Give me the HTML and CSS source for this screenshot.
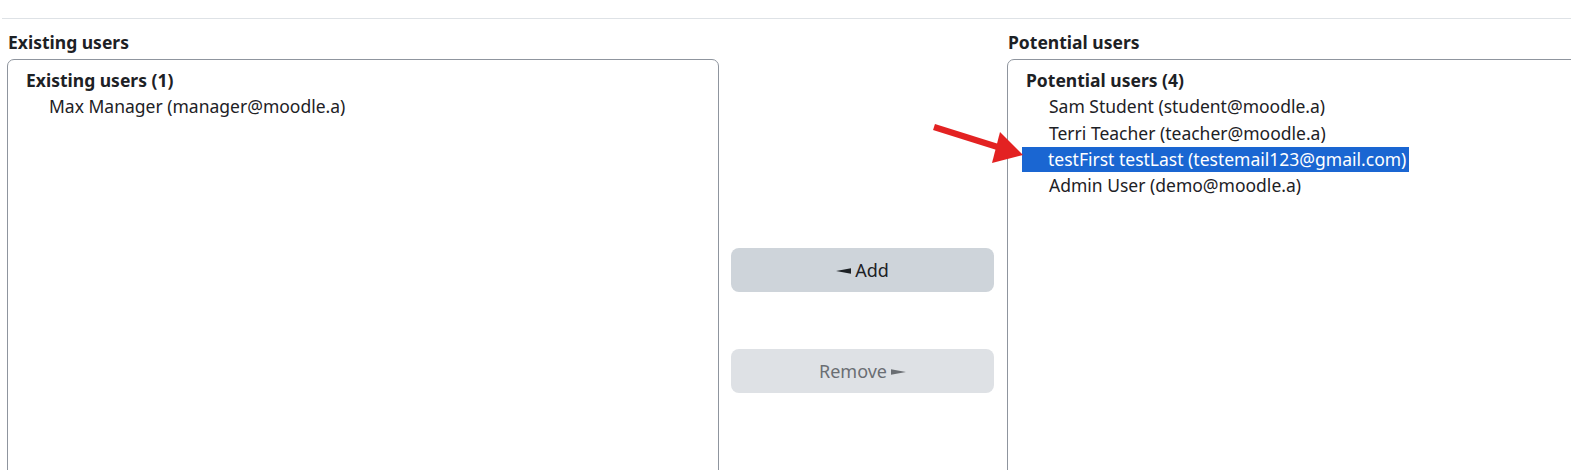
FILE: index.html
```html
<!DOCTYPE html>
<html>
<head>
<meta charset="utf-8">
<link rel="stylesheet" href="styles.css">
</head>
<body>
<div class="page">
  <div class="topline"></div>
  <div class="selector">
    <div class="col col-side">
      <label class="col-label">Existing users</label>
      <div class="listbox">
        <div class="group-label">Existing users (1)</div>
        <div class="option">Max Manager (manager@moodle.a)</div>
      </div>
    </div>
    <div class="col col-mid">
      <button class="btn btn-add"><svg class="tri" width="15" height="6" viewBox="0 0 15 6"><polygon points="0,3 15,0.3 15,5.7" fill="#1d2125"/></svg>Add</button>
      <button class="btn btn-remove" disabled>Remove<svg class="tri tri-r" width="15" height="6" viewBox="0 0 15 6"><polygon points="15,3 0,0.3 0,5.7" fill="#6a6e73"/></svg></button>
    </div>
    <div class="col col-side">
      <label class="col-label">Potential users</label>
      <div class="listbox">
        <div class="group-label">Potential users (4)</div>
        <div class="option">Sam Student (student@moodle.a)</div>
        <div class="option">Terri Teacher (teacher@moodle.a)</div>
        <div class="option selected"><span>testFirst testLast (testemail123@gmail.com)</span></div>
        <div class="option">Admin User (demo@moodle.a)</div>
      </div>
    </div>
  </div>
  <svg class="annot-arrow" width="110" height="60" viewBox="0 0 110 60">
    <line x1="4" y1="9" x2="74" y2="31" stroke="#e32222" stroke-width="6.5"/>
    <polygon points="93,37 70,14 62,45" fill="#e32222"/>
  </svg>
</div>
</body>
</html>
```
FILE: styles.css
```css
html, body {
  margin: 0;
  padding: 0;
  background: #fff;
}
body {
  font-family: "Noto Sans", "Open Sans", sans-serif;
  font-size: 17.5px;
  color: #1d2125;
  overflow: hidden;
}
.page {
  position: relative;
  width: 1571px;
  height: 470px;
  overflow: hidden;
}
.topline {
  margin: 18px 0 0 2px;
  border-top: 1px solid #dee2e6;
}
.selector {
  display: flex;
  padding-left: 7px;
  width: 1800px;
}
.col-side {
  width: 712px;
  flex: none;
  display: flex;
  flex-direction: column;
}
.col-label {
  font-weight: 700;
  line-height: 24px;
  margin-top: 11px;
  height: 29px;
  padding-left: 1px;
}
.listbox {
  border: 1px solid #8f959e;
  border-radius: 7px;
  height: 440px;
  padding: 7px 0 0 14px;
  box-sizing: border-box;
}
.group-label {
  font-weight: 700;
  height: 26.3px;
  line-height: 26.3px;
  padding-left: 4px;
}
.option {
  height: 26.3px;
  line-height: 26.3px;
  white-space: nowrap;
}
.option {
  padding-left: 27px;
}
.option.selected {
  padding-left: 0;
}
.option.selected > span {
  display: inline-block;
  background: #1a66d2;
  color: #fff;
  padding-right: 3px;
  padding-left: 26px;
  height: 25px;
  line-height: 25px;
}
.col-mid {
  width: 263px;
  flex: none;
  margin: 0 13px 0 12px;
  padding-top: 229px;
  display: flex;
  flex-direction: column;
  gap: 57px;
}
.btn {
  height: 44px;
  border: none;
  border-radius: 8px;
  font-family: inherit;
  font-size: 18px;
  color: #1d2125;
  background: #ced4da;
  display: flex;
  align-items: center;
  justify-content: center;
  gap: 4px;
  padding: 0;
}
.btn-remove {
  background: #dee1e5;
  color: #6a6e73;
}
.tri {
  margin-top: 1px;
}
.annot-arrow {
  position: absolute;
  left: 930px;
  top: 118px;
}
```
